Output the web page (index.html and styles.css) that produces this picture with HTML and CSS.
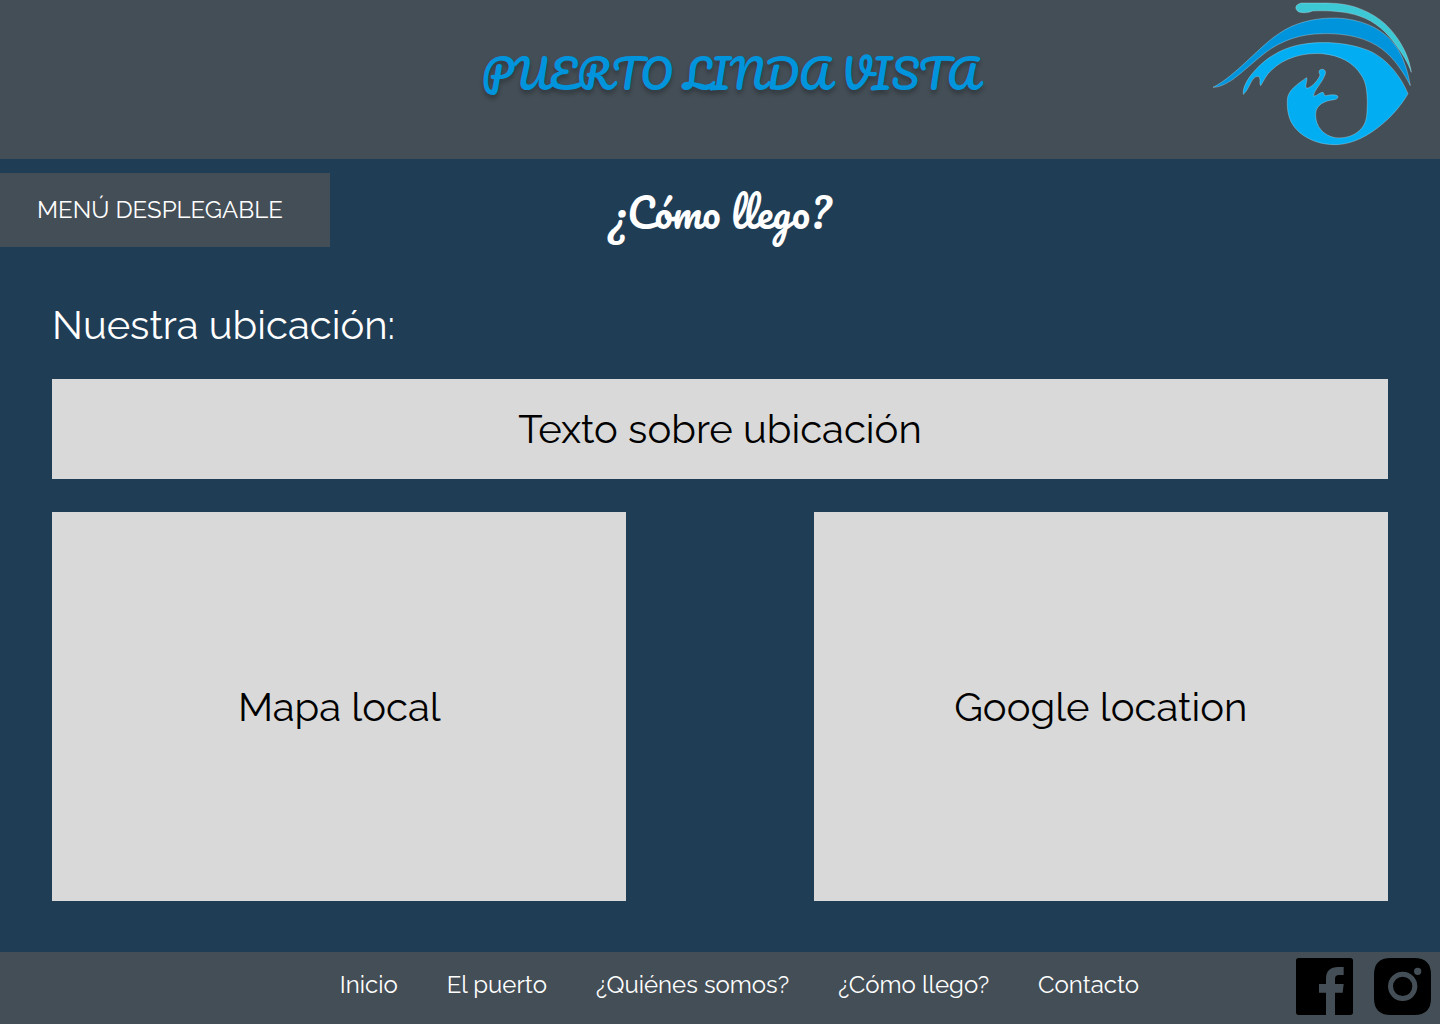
FILE: index.html
```html
<!DOCTYPE html>
<html lang="es">
<head>
  <meta charset="utf-8">
  <meta name="viewport" content="width=device-width, initial-scale=1">
  <title>Puerto Linda Vista - ¿Cómo llego?</title>
  <link rel="stylesheet" href="styles.css">
</head>
<body>
  <header class="site-header">
    <p class="brand">PUERTO LINDA VISTA</p>
    <svg class="logo" viewBox="0 0 645 465" role="img" aria-label="Puerto Linda Vista">
      <g stroke="#c4ecfa" stroke-width="1">
      <path fill="#3cc8d4" d="M289 9H350C390 9 427 11 464 26C529 51 562 89 587 130C607 164 615 191 619 217C610 190 592 160 572 134C545 96 512 65 463 48C421 34 373 31 322 33C311 39 291 40 280 35C268 27 270 13 289 9Z"/>
      <path fill="#0094dc" d="M24 262C60 244 92 214 125 184C166 147 204 105 260 79C307 58 367 50 420 56C485 65 537 89 573 139C595 170 609 216 616 257C596 218 570 177 531 147C485 113 423 99 351 101C288 102 231 120 181 158C151 181 116 214 84 238C61 253 43 262 24 262Z"/>
      <path fill="#02adf2" d="M115 283C112 262 130 232 151 210C190 166 245 139 298 132C355 123 428 128 484 149C536 168 583 219 609 281C590 314 562 347 532 372C494 405 445 432 395 434C336 436 284 409 262 372C249 350 246 325 247 300C247 272 277 252 305 233C308 245 298 258 305 265C321 264 345 233 345 224C340 217 341 208 352 208C362 208 364 218 358 229C350 250 325 273 326 289C337 287 346 276 354 277C360 282 355 289 363 287C375 284 390 283 397 287C402 292 396 298 388 299C359 302 333 314 332 341C330 379 356 407 390 413C436 418 471 395 481 365C487 350 486 327 487 307C486 278 485 249 469 226C446 187 404 166 352 161C294 157 237 174 200 210C183 225 178 240 167 257C161 249 170 233 159 229C138 229 133 270 115 283Z"/>
      </g>
    </svg>
  </header>

  <main class="content">
    <div class="title-row">
      <button class="menu-button" type="button">MENÚ DESPLEGABLE</button>
      <h1 class="page-title">¿Cómo llego?</h1>
    </div>
    <section class="location">
      <h2 class="section-title">Nuestra ubicación:</h2>
      <div class="panel">Texto sobre ubicación</div>
      <div class="maps">
        <div class="panel map">Mapa local</div>
        <div class="panel map">Google location</div>
      </div>
    </section>
  </main>

  <footer class="site-footer">
    <nav class="footer-nav">
      <a href="#inicio">Inicio</a>
      <a href="#puerto">El puerto</a>
      <a href="#quienes">¿Quiénes somos?</a>
      <a href="#llego">¿Cómo llego?</a>
      <a href="#contacto">Contacto</a>
    </nav>
    <div class="social">
      <a href="#facebook" aria-label="Facebook">
        <svg viewBox="0 0 171 171"><path d="M8 0H163Q171 0 171 8V163Q171 171 163 171H117V104H140L143 78H117V62Q117 51 129 51H143V27H127Q90 27 90 62V78H69V104H90V171H8Q0 171 0 163V8Q0 0 8 0Z"/></svg>
      </a>
      <a href="#instagram" aria-label="Instagram">
        <svg viewBox="0 0 171 171"><path fill-rule="evenodd" d="M50 0H121Q171 0 171 50V121Q171 171 121 171H50Q0 171 0 121V50Q0 0 50 0ZM86 41A44 44 0 1 0 86 129A44 44 0 1 0 86 41ZM86 56A29 29 0 1 1 86 114A29 29 0 1 1 86 56ZM131 29A11 11 0 1 0 131 51A11 11 0 1 0 131 29Z"/></svg>
      </a>
    </div>
  </footer>
</body>
</html>
```
FILE: styles.css
```css
* {
  box-sizing: border-box;
}

body {
  display: flex;
  flex-direction: column;
  min-height: 100vh;
  margin: 0;
  background: #1f3d55;
  color: #fff;
  font-family: Raleway, Lato, sans-serif;
}

.site-header {
  display: grid;
  grid-template-columns: 1fr auto 1fr;
  align-items: center;
  padding: 0 20px 4px 40px;
  background: #444e56;
}

.brand {
  grid-column: 2;
  margin: 0;
  padding-bottom: 10px;
  color: #0094dc;
  font-family: Pacifico, Lato, cursive;
  font-size: 40px;
  font-weight: 400;
  line-height: 70px;
  text-shadow: 0 4px 4px rgba(0, 0, 0, 0.25);
  white-space: nowrap;
}

.logo {
  justify-self: end;
  width: 215px;
  height: 155px;
}

.content {
  display: flex;
  flex: 1;
  flex-direction: column;
  padding-top: 14px;
}

.title-row {
  display: grid;
  grid-template-columns: 330px 1fr 330px;
  align-items: center;
}

.menu-button {
  height: 74px;
  padding: 0 37px 2px;
  border: 0;
  background: #444e56;
  color: #fff;
  font: inherit;
  font-size: 24px;
  text-align: left;
  white-space: nowrap;
}

.page-title {
  margin: 0;
  padding-top: 4px;
  font-family: Pacifico, Lato, cursive;
  font-size: 40px;
  font-weight: 400;
  line-height: 70px;
  text-align: center;
}

.location {
  display: flex;
  flex: 1;
  flex-direction: column;
  padding: 54px 52px 51px;
}

.section-title {
  margin: 0 0 30px;
  font-size: 40px;
  font-weight: 400;
  line-height: 48px;
}

.panel {
  display: flex;
  align-items: center;
  justify-content: center;
  min-height: 100px;
  background: #d9d9d9;
  color: #000;
  font-size: 40px;
  line-height: 48px;
}

.maps {
  display: grid;
  flex: 1;
  grid-template-columns: 1fr 1fr;
  gap: 14%;
  margin-top: 33px;
}

.site-footer {
  display: grid;
  grid-template-columns: 1fr auto 1fr;
  align-items: center;
  min-height: 72px;
  padding: 0 9px 4px 48px;
  background: #444e56;
}

.footer-nav {
  display: flex;
  grid-column: 2;
  gap: 49px;
  padding-bottom: 2px;
  font-size: 24px;
  line-height: 28px;
}

.footer-nav a {
  color: #fff;
  text-decoration: none;
}

.social {
  display: flex;
  justify-content: flex-end;
  gap: 21px;
}

.social svg {
  display: block;
  width: 57px;
  height: 57px;
}
```
